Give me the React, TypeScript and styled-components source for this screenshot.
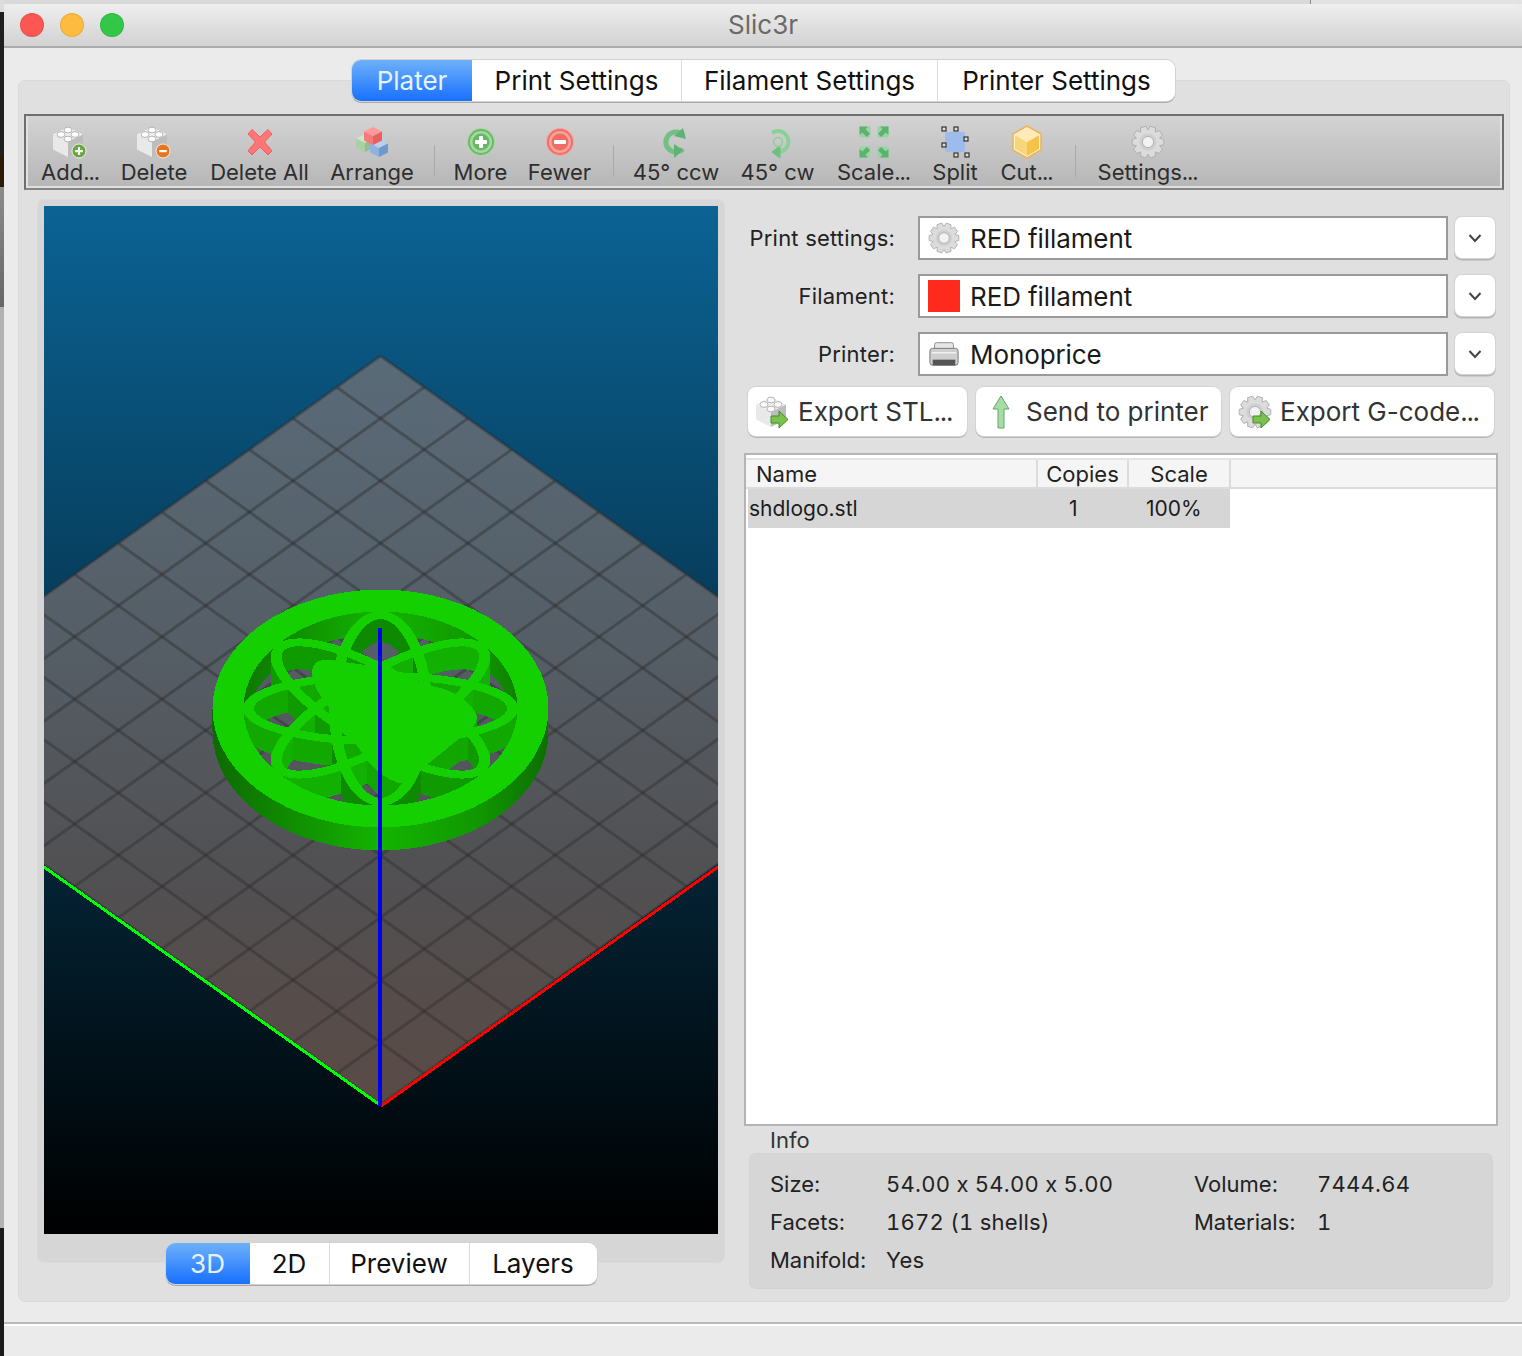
import React from "react";
import styled, { createGlobalStyle } from "styled-components";

const Global = createGlobalStyle`
  html, body { margin: 0; padding: 0; background: #b0b0b0; }
  * { box-sizing: border-box; }
  body { font-family: Inter, "Liberation Sans", sans-serif; color: #141414; font-feature-settings: "calt" 0; }
`;

const Page = styled.div`
  width: 1522px; height: 1356px; display: flex; overflow: hidden;
`;
const DesktopEdge = styled.div`
  width: 4px; display: flex; flex-direction: column; flex: none;
`;
const EdgePart = styled.div<{ $h: number; $bg: string }>`
  height: ${p => p.$h}px; background: ${p => p.$bg};
`;
const Win = styled.div`
  flex: 1; display: flex; flex-direction: column; background: #ebebeb; min-width: 0;
`;
const Sliver = styled.div`
  height: 4px; flex: none; background: linear-gradient(90deg, #d9d9d9 1306px, #8a8a8a 1306px, #8a8a8a 1307px, #e2e2e2 1307px);
`;
const TitleBar = styled.div`
  height: 44px; flex: none; display: grid; grid-template-columns: 1fr auto 1fr; align-items: center;
  background: linear-gradient(#efefef, #d2d2d2); border-bottom: 2px solid #adadad; border-radius: 10px 10px 0 0;
  padding: 0 16px;
`;
const Lights = styled.div` display: flex; gap: 16px; `;
const Light = styled.div<{ $c: string }>`
  width: 24px; height: 24px; border-radius: 50%; background: ${p => p.$c}; box-shadow: inset 0 0 0 1px rgba(0,0,0,.08);
`;
const Title = styled.div` font-size: 26px; color: #6a6a6a; line-height: 30px; `;
const Content = styled.div`
  flex: 1; display: flex; flex-direction: column; padding: 12px 12px 20px 14px; min-height: 0;
`;
const Footer = styled.div`
  height: 34px; flex: none; background: #ebebeb; border-top: 2px solid #b9b9b9; box-shadow: inset 0 2px 0 #fff;
`;
const SegRow = styled.div` display: flex; justify-content: center; position: relative; z-index: 2; padding-right: 1px; `;
const Segmented = styled.div`
  display: flex; height: 41px; margin-bottom: 1px; border-radius: 9px; background: #fff; overflow: hidden;
  box-shadow: 0 0 0 1px #d2d2d2, 0 1.5px 0 .5px #a9a9a9;
`;
const Seg = styled.div<{ $active?: boolean; $w: number }>`
  width: ${p => p.$w}px; display: flex; align-items: center; justify-content: center;
  font-size: 26px; line-height: 41px; color: ${p => (p.$active ? "#e8f2ff" : "#111")};
  background: ${p => (p.$active ? "linear-gradient(#6db1fa, #1870ff)" : "#fff")};
  border-left: ${p => (p.$active ? "0" : "1px solid #dcdcdc")};
  &:nth-child(2) { border-left: 0; }
`;
const Pane = styled.div`
  flex: 1; margin-top: -22px; background: #e0e0e0; border: 1px solid #d9d9d9; border-radius: 7px;
  padding: 33px 5px 0; display: flex; flex-direction: column; min-height: 0;
`;
const Toolbar = styled.div`
  height: 76px; flex: none; display: flex; align-items: flex-start; gap: 21px; padding: 9px 0 0 15px;
  background: linear-gradient(#d3d3d3, #b6b6b6);
  border: 2px solid #6e6e6e; border-bottom-color: #858585;
  box-shadow: inset 2px 0 0 #e2e2e2, inset -2px 0 0 #e2e2e2, inset 0 -2px 0 #dedede;
`;
const ToolItem = styled.div<{ $w: number }>`
  width: ${p => p.$w}px; flex: none; display: flex; flex-direction: column; align-items: center;
`;
const ToolLabel = styled.div` font-size: 22px; line-height: 26px; color: #2e2e2e; white-space: nowrap; `;
const ToolSep = styled.div` width: 1px; height: 32px; margin: 20px -1.5px 0 0; background: #a9a9a9; flex: none; `;
const Dots = styled.span` letter-spacing: -.05em; `;
const Main = styled.div`
  flex: 1; display: flex; margin-top: 10px; padding-left: 14px; gap: 20px; min-height: 0;
`;
const LeftCol = styled.div` width: 686px; flex: none; display: flex; flex-direction: column; `;
const CanvasFrame = styled.div`
  background: #d6d6d6; border-radius: 6px; padding: 6px 6px 28px; height: 1062px;
  box-shadow: 0 0 0 1px #dadada;
`;
const Canvas = styled.svg` display: block; width: 674px; height: 1028px; `;
const BottomSegRow = styled(SegRow)` margin-top: -19px; padding-right: 0; `;
const RightCol = styled.div` width: 754px; flex: none; display: flex; flex-direction: column; padding-top: 16px; `;
const PresetRow = styled.div`
  display: grid; grid-template-columns: 151px 530px 40px; column-gap: 23px; height: 44px; margin-bottom: 14px; align-items: center;
  & > :last-child { margin-left: -16px; }
`;
const PresetLabel = styled.div` text-align: right; font-size: 22px; color: #222; white-space: nowrap; letter-spacing: .2px; `;
const Combo = styled.div`
  height: 44px; background: #fff; border: 2px solid #9a9a9a; display: flex; align-items: center; gap: 10px; padding-left: 8px;
  font-size: 26px; color: #1a1a1a; letter-spacing: -.1px;
`;
const Swatch = styled.div` width: 32px; height: 32px; background: #ff2a1c; flex: none; `;
const Chevron = styled.div`
  width: 40px; height: 41px; background: #fff; border-radius: 7px; display: flex; align-items: center; justify-content: center;
  box-shadow: 0 0 0 1px #d4d4d4, 0 1.5px 0 1px #b5b5b5; margin-top: -1px;
`;
const Buttons = styled.div`
  display: grid; grid-template-columns: 219px 245px 264px; column-gap: 9px; margin: -3px 0 17px 4px;
`;
const Btn = styled.div`
  height: 49px; background: #fff; border-radius: 8px; display: flex; align-items: center; gap: 8px; padding-left: 8px;
  box-shadow: 0 0 0 1px #d4d4d4, 0 1.5px 0 .5px #b5b5b5; font-size: 26px; color: #333; white-space: nowrap;
`;
const ListBox = styled.div`
  height: 673px; flex: none; background: #fff; border: 2px solid #b4b4b4; padding-top: 3px; display: flex; flex-direction: column;
`;
const ListHead = styled.div`
  display: grid; grid-template-columns: 292px 91px 102px 1fr; height: 31px; background: #f5f5f5; border-top: 2px solid #e4e4e4; border-bottom: 2px solid #dcdcdc;
  font-size: 22px; line-height: 28px; color: #222;
`;
const HeadCell = styled.div<{ $center?: boolean }>`
  border-right: 2px solid #dcdcdc; padding-left: ${p => (p.$center ? 0 : 10)}px; text-align: ${p => (p.$center ? "center" : "left")};
`;
const ListRow = styled.div`
  display: grid; grid-template-columns: 290px 91px 101px; width: 482px; height: 39px; align-items: center; background: #d6d6d6;
  font-size: 21px; color: #1c1c1c; margin-left: 2px;
`;
const RowCell = styled.div<{ $pad: number }>` padding-left: ${p => p.$pad}px; `;
const InfoLabel = styled.div` font-size: 22px; line-height: 28px; color: #333; margin: 0 0 0 26px; `;
const InfoBox = styled.div`
  height: 134px; width: 742px; margin-left: 6px; background: #d6d6d6; border-radius: 6px; padding: 11px 20px 0; box-shadow: 0 0 0 1px #d2d2d2;
  display: grid; grid-template-columns: 116px 308px 123px 1fr; grid-auto-rows: 38px; align-items: center;
  font-size: 22px; color: #222;
`;
const InfoCell = styled.span<{ $value: boolean }>`
  ${p => (p.$value ? "font-variant-numeric: tabular-nums; letter-spacing: .25px;" : "")}
`;
const Icon = styled.svg`
  width: 34px; height: 34px; flex: none; display: block;
`;
const ComboIcon = styled(Icon)` width: 32px; height: 32px; `;

const gearPath = (n: number, ro: number, ri: number) => {
  const pts: string[] = [];
  for (let i = 0; i < n; i++) {
    const a = (i / n) * Math.PI * 2;
    const w = (Math.PI * 2) / n;
    [[ri, -0.5], [ro, -0.27], [ro, 0.27], [ri, 0.5]].forEach(([r, o]) => {
      pts.push(`${(17 + r * Math.cos(a + o * w)).toFixed(2)},${(17 + r * Math.sin(a + o * w)).toFixed(2)}`);
    });
  }
  return pts.join(" ");
};

const Gear: React.FC = () => (
  <g>
    <polygon points={gearPath(10, 16, 12.2)} fill="#dcdcdc" stroke="#b0b0b0" strokeWidth="1" />
    <circle cx="17" cy="17" r="8.6" fill="#cfcfcf" />
    <circle cx="17" cy="17" r="5.6" fill="#f2f2f2" stroke="#aaa" strokeWidth=".8" />
  </g>
);

const Cube: React.FC<{ x: number; y: number; s: number; t: string; l: string; r: string }> = ({ x, y, s, t, l, r }) => (
  <g>
    <polygon points={`${x},${y} ${x + s},${y + s * 0.5} ${x},${y + s} ${x - s},${y + s * 0.5}`} fill={t} />
    <polygon points={`${x - s},${y + s * 0.5} ${x},${y + s} ${x},${y + s * 2} ${x - s},${y + s * 1.5}`} fill={l} />
    <polygon points={`${x + s},${y + s * 0.5} ${x},${y + s} ${x},${y + s * 2} ${x + s},${y + s * 1.5}`} fill={r} />
  </g>
);

const Brick: React.FC = () => (
  <g>
    <Cube x={15} y={2} s={15} t="#f0f0f0" l="#e9e9e9" r="#bdbdbd" />
    {[[15, 5], [8, 9.5], [22, 9.5], [15, 14]].map(([x, y]) => (
      <ellipse key={`${x}-${y}`} cx={x} cy={y} rx="4" ry="2.9" fill="#fbfbfb" stroke="#b5b5b5" strokeWidth="1" />
    ))}
  </g>
);

const Badge: React.FC<{ c: string; plus?: boolean }> = ({ c, plus }) => (
  <g>
    <circle cx="26" cy="26" r="7" fill={c} stroke="#fff" strokeWidth=".8" />
    <rect x="22.2" y="25" width="7.6" height="2.2" fill="#fff" />
    {plus && <rect x="24.9" y="22.2" width="2.2" height="7.6" fill="#fff" />}
  </g>
);

const CircleBtn: React.FC<{ a: string; b: string; plus?: boolean }> = ({ a, b, plus }) => (
  <g>
    <circle cx="17" cy="17" r="14" fill={b} />
    <circle cx="17" cy="17" r="12" fill="none" stroke={a} strokeWidth="1.8" />
    <circle cx="17" cy="17" r="8.5" fill={a} />
    <rect x="11" y="15" width="12" height="4" rx="1" fill="#fff" />
    {plus && <rect x="15" y="11" width="4" height="12" rx="1" fill="#fff" />}
  </g>
);

const Arrowlet: React.FC<{ r: number; x: number; y: number }> = ({ r, x, y }) => (
  <g transform={`translate(${x},${y}) rotate(${r})`}>
    <rect x="-5.5" y="-5.5" width="11" height="11" fill="#9ad3a6" />
    <polygon points="-5.5,-5.5 3,-5.5 0.5,-2.8 5,1.8 1.8,5 -2.8,0.5 -5.5,3" fill="#5cb36c" />
  </g>
);

const ScaleIcon = () => (
  <>
    <Arrowlet r={0} x={8} y={7} />
    <Arrowlet r={90} x={26} y={7} />
    <Arrowlet r={180} x={26} y={27} />
    <Arrowlet r={270} x={8} y={27} />
  </>
);

const icons: Record<string, React.ReactNode> = {
  add: <><Brick /><Badge c="#6aa646" plus /></>,
  del: <><Brick /><Badge c="#e8761e" /></>,
  x: <path d="M5 9 L9 4.5 L17 12 L25 4.5 L29 9 L21.5 17 L29 26 L25 30 L17 22 L9 30 L5 26 L12.5 17 Z" fill="#ff7676" stroke="#f25c5c" strokeWidth="1" />,
  arrange: (
    <>
      <Cube x={10} y={9} s={9} t="#cde6c9" l="#a9cfa3" r="#93bf8c" />
      <Cube x={24} y={14} s={9} t="#b6d0ee" l="#8fb3de" r="#6f98cd" />
      <Cube x={18} y={2} s={9} t="#ff9a9a" l="#f47a7c" r="#e85f64" />
    </>
  ),
  more: <CircleBtn a="#69b766" b="#a5d8a0" plus />,
  fewer: <CircleBtn a="#ef6d62" b="#f5a49d" />,
  ccw: (
    <g fill="none" stroke="#72c083" strokeWidth="5">
      <path d="M24 10 A10 10 0 1 0 24 24" />
      <polygon points="24,3 27,14 15,11" fill="#5fb372" stroke="none" />
      <polygon points="15,19 24,25 15,33" fill="#5fb372" stroke="none" />
    </g>
  ),
  cw: (
    <g fill="none" stroke="#8ad197" strokeWidth="4">
      <path d="M11 8 A10.5 10.5 0 1 1 15 27" />
      <path d="M19 21 L11 27 L19 33 Z" fill="#6ec07e" stroke="#6ec07e" strokeWidth="1" />
      <circle cx="17" cy="17" r="4.5" strokeWidth="1.5" />
    </g>
  ),
  scale: <ScaleIcon />,
  split: (
    <>
      <rect x="7" y="7" width="20" height="20" rx="2" fill="#9dbcec" />
      {[[6, 4], [18, 4], [28, 14], [6, 20], [18, 30], [29, 30]].map(([x, y]) => (
        <rect key={`${x}-${y}`} x={x - 2} y={y - 2} width="4" height="4" fill="#ddd" stroke="#333" strokeWidth="1.2" />
      ))}
    </>
  ),
  cut: (
    <>
      <polygon points="17,1 31,9 31,25 17,33 3,25 3,9" fill="#fff2cf" stroke="#eab65a" strokeWidth="1.6" />
      <polygon points="17,17 29,10 29,24 17,31" fill="#f5c24c" />
      <polygon points="17,17 5,10 5,24 17,31" fill="#f8d67a" />
      <polygon points="17,3 29,10 17,17 5,10" fill="#ffeab8" />
    </>
  ),
  gear: <Gear />,
};

type Tool = { icon: string; label: string; w: number; dots?: boolean } | "|";
const tools: Tool[] = [
  { icon: "add", label: "Add", w: 58, dots: true },
  { icon: "del", label: "Delete", w: 68 },
  { icon: "x", label: "Delete All", w: 101 },
  { icon: "arrange", label: "Arrange", w: 82 },
  "|",
  { icon: "more", label: "More", w: 52 },
  { icon: "fewer", label: "Fewer", w: 64 },
  "|",
  { icon: "ccw", label: "45° ccw", w: 86 },
  { icon: "cw", label: "45° cw", w: 75 },
  { icon: "scale", label: "Scale", w: 75, dots: true },
  { icon: "split", label: "Split", w: 46 },
  { icon: "cut", label: "Cut", w: 55, dots: true },
  "|",
  { icon: "gear", label: "Settings", w: 104, dots: true },
];

const cx = 380.5, cy = 708.5;

const ModelShape: React.FC<{ ring: string; rods: string[]; blob: string }> = ({ ring, rods, blob }) => (
  <g>
    <g transform={`translate(${cx},${cy}) scale(1,0.708)`}>
      <path fillRule="evenodd" fill={ring}
        d="M-168 0 A168 168 0 1 0 168 0 A168 168 0 1 0 -168 0 Z M-137 0 A137 137 0 1 1 137 0 A137 137 0 1 1 -137 0 Z" />
      {[0, 41, 90, -41].map((a, i) => (
        <ellipse key={a} rx="132" ry="46" fill="none" stroke={rods[i]} strokeWidth="11" transform={`rotate(${a})`} />
      ))}
    </g>
    <path fill={blob} d="M312 672 C312 662 320 659 330 660 L380 667 C400 672 415 682 432 686 C455 691 470 700 477 716 C478 724 470 730 460 738 L418 772 C408 782 402 786 396 782 C385 778 378 772 370 764 L340 722 C330 708 312 690 312 672 Z" />
  </g>
);

const lines = Array.from({ length: 13 }, (_, i) => i);

const Scene: React.FC = () => {
  const top = { x: 380.5, y: 356 };
  const dx = 43.7, dy = 31.2;
  return (
    <Canvas viewBox="44 206 674 1028">
      <defs>
        <linearGradient id="sky" x1="0" y1="0" x2="0" y2="1">
          <stop offset="0" stopColor="#0b6394" />
          <stop offset="1" stopColor="#000" />
        </linearGradient>
        <linearGradient id="bed" gradientUnits="userSpaceOnUse" x1="0" y1="356" x2="0" y2="1106">
          <stop offset="0" stopColor="#596b78" />
          <stop offset=".4" stopColor="#555d65" />
          <stop offset=".7" stopColor="#515052" />
          <stop offset="1" stopColor="#5a4a45" />
        </linearGradient>
        <linearGradient id="wall" gradientUnits="userSpaceOnUse" x1="-168" y1="0" x2="168" y2="0">
          <stop offset="0" stopColor="#0d6a00" />
          <stop offset=".2" stopColor="#0f8800" />
          <stop offset=".5" stopColor="#13b400" />
          <stop offset=".8" stopColor="#109600" />
          <stop offset="1" stopColor="#0d6e00" />
        </linearGradient>
      </defs>
      <rect x="44" y="206" width="674" height="1028" fill="url(#sky)" />
      <polygon points={`${top.x},${top.y} ${top.x + 12 * dx},${top.y + 12 * dy} ${top.x},${top.y + 24 * dy} ${top.x - 12 * dx},${top.y + 12 * dy}`} fill="url(#bed)" />
      <g stroke="#2e2e2e" strokeOpacity=".42" strokeWidth="3">
        {lines.map(i => (
          <line key={`a${i}`} x1={top.x + i * dx} y1={top.y + i * dy} x2={top.x + (i - 12) * dx} y2={top.y + (i + 12) * dy} />
        ))}
        {lines.map(i => (
          <line key={`b${i}`} x1={top.x - i * dx} y1={top.y + i * dy} x2={top.x + (12 - i) * dx} y2={top.y + (i + 12) * dy} />
        ))}
      </g>
      <g shapeRendering="crispEdges">
        {Array.from({ length: 23 }, (_, i) => 23 - i).map(d => (
          <g key={d} transform={`translate(0,${d})`}>
            <ModelShape ring="url(#wall)" rods={["#11a800", "#0f9a00", "#0e8a00", "#12b000"]} blob="#11a600" />
          </g>
        ))}
        <ModelShape ring="#14d000" rods={["#14d000", "#14d000", "#14d000", "#14d000"]} blob="#14d000" />
      </g>
      <g strokeWidth="3" shapeRendering="crispEdges">
        <line x1="44" y1="867" x2="380" y2="1105" stroke="#0f0" />
        <line x1="381" y1="1106" x2="718" y2="867" stroke="#f00" />
      </g>
      <rect x="378" y="628" width="4" height="478" fill="#0000f0" />
    </Canvas>
  );
};

const Printer = () => (
  <ComboIcon viewBox="0 0 34 34">
    <rect x="7" y="5" width="20" height="9" rx="2" fill="#e6e6e6" stroke="#8a8a8a" />
    <rect x="2" y="11" width="30" height="18" rx="3" fill="#cfcfcf" stroke="#777" />
    <rect x="5" y="23" width="24" height="6" fill="#555" />
    <rect x="4" y="15" width="26" height="1.5" fill="#f3f3f3" />
  </ComboIcon>
);

const Export: React.FC<{ gear?: boolean }> = ({ gear }) => (
  <Icon viewBox="0 0 34 34">
    {gear ? <Gear /> : <Brick />}
    <polygon points="15,21 23,21 23,16 32,24.5 23,33 23,28 15,28" fill="#7cc04e" stroke="#3f8f2c" strokeWidth="1" />
  </Icon>
);

const Chev = () => (
  <svg width="14" height="10" viewBox="0 0 14 10">
    <path d="M1.5 2 L7 8 L12.5 2" fill="none" stroke="#444" strokeWidth="2" />
  </svg>
);

const presets = [
  { label: "Print settings:", text: "RED fillament", icon: <ComboIcon viewBox="0 0 34 34"><Gear /></ComboIcon> },
  { label: "Filament:", text: "RED fillament", icon: <Swatch /> },
  { label: "Printer:", text: "Monoprice", icon: <Printer /> },
];

const info = [
  ["Size:", "54.00 x 54.00 x 5.00", "Volume:", "7444.64"],
  ["Facets:", "1672 (1 shells)", "Materials:", "1"],
  ["Manifold:", "Yes", "", ""],
];

export default function App() {
  return (
    <Page>
      <Global />
      <DesktopEdge>
        <EdgePart $h={12} $bg="#dcdcdc" />
        <EdgePart $h={144} $bg="#1f1f1f" />
        <EdgePart $h={31} $bg="#2b1a06" />
        <EdgePart $h={120} $bg="linear-gradient(#8c8c8c, #666)" />
        <EdgePart $h={921} $bg="#b2b2b2" />
        <EdgePart $h={128} $bg="#1a1a1a" />
      </DesktopEdge>
      <Win>
        <Sliver />
        <TitleBar>
          <Lights>
            <Light $c="#fc5753" />
            <Light $c="#fdbc40" />
            <Light $c="#33c748" />
          </Lights>
          <Title>Slic3r</Title>
          <span />
        </TitleBar>
        <Content>
          <SegRow>
            <Segmented>
              <Seg $active $w={120}>Plater</Seg>
              <Seg $w={209}>Print Settings</Seg>
              <Seg $w={256}>Filament Settings</Seg>
              <Seg $w={238}>Printer Settings</Seg>
            </Segmented>
          </SegRow>
          <Pane>
            <Toolbar>
              {tools.map((t, i) =>
                t === "|" ? (
                  <ToolSep key={i} />
                ) : (
                  <ToolItem key={i} $w={t.w}>
                    <Icon viewBox="0 0 34 34">{icons[t.icon]}</Icon>
                    <ToolLabel>{t.label}{t.dots ? <Dots>...</Dots> : null}</ToolLabel>
                  </ToolItem>
                )
              )}
            </Toolbar>
            <Main>
              <LeftCol>
                <CanvasFrame>
                  <Scene />
                </CanvasFrame>
                <BottomSegRow>
                  <Segmented>
                    <Seg $active $w={84}>3D</Seg>
                    <Seg $w={79}>2D</Seg>
                    <Seg $w={140}>Preview</Seg>
                    <Seg $w={128}>Layers</Seg>
                  </Segmented>
                </BottomSegRow>
              </LeftCol>
              <RightCol>
                {presets.map(p => (
                  <PresetRow key={p.label}>
                    <PresetLabel>{p.label}</PresetLabel>
                    <Combo>{p.icon}{p.text}</Combo>
                    <Chevron><Chev /></Chevron>
                  </PresetRow>
                ))}
                <Buttons>
                  <Btn><Export /><span>Export STL<Dots>...</Dots></span></Btn>
                  <Btn>
                    <Icon viewBox="0 0 34 34">
                      <polygon points="17,1 25,14 20,14 20,33 14,33 14,14 9,14" fill="#a9dba6" stroke="#5fa866" strokeWidth="1" />
                    </Icon>
                    Send to printer
                  </Btn>
                  <Btn><Export gear /><span>Export G-code<Dots>...</Dots></span></Btn>
                </Buttons>
                <ListBox>
                  <ListHead>
                    <HeadCell>Name</HeadCell>
                    <HeadCell $center>Copies</HeadCell>
                    <HeadCell $center>Scale</HeadCell>
                    <span />
                  </ListHead>
                  <ListRow>
                    <RowCell $pad={1}>shdlogo.stl</RowCell>
                    <RowCell $pad={31}>1</RowCell>
                    <RowCell $pad={17}>100%</RowCell>
                  </ListRow>
                </ListBox>
                <InfoLabel>Info</InfoLabel>
                <InfoBox>
                  {info.flat().map((c, i) => <InfoCell key={i} $value={i % 2 === 1}>{c}</InfoCell>)}
                </InfoBox>
              </RightCol>
            </Main>
          </Pane>
        </Content>
        <Footer />
      </Win>
    </Page>
  );
}
